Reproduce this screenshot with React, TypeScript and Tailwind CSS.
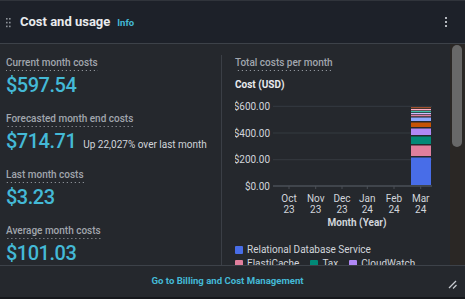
import React from "react";

const segs: [number, number, string][] = [
  [107, 108.3, "#a0522d"],
  [109, 110.3, "#ffb0c8"],
  [111, 112.3, "#40bfa9"],
  [113, 114.3, "#d6baff"],
  [115, 116.3, "#e07f9d"],
  [117.5, 121, "#8ea9ff"],
  [122.5, 127, "#c55305"],
  [128.5, 135, "#b088f5"],
  [136.5, 144, "#018977"],
  [145.5, 156, "#e07f9d"],
  [157.5, 185, "#486de8"],
];

const months: [string, string, number][] = [
  ["Oct", "23", 54],
  ["Nov", "23", 80.7],
  ["Dec", "23", 107],
  ["Jan", "24", 132.3],
  ["Feb", "24", 159],
  ["Mar", "24", 185.7],
];

const labelCls =
  "self-start text-[10px] leading-[13px] font-medium text-[#a1a6ad] pb-[2px] bg-[linear-gradient(to_right,#a4a9b0_1px,transparent_1px)] bg-[length:4px_1px] bg-repeat-x bg-bottom";

function Block({ label, value, extra }: { label: string; value: string; extra?: string }) {
  return (
    <div className="h-[56px] shrink-0 flex flex-col">
      <span className={labelCls}>{label}</span>
      <div className="mt-[2px] flex items-baseline">
        <span className="text-[20px] leading-[24px] font-medium tracking-[-0.5px] text-[#44b9d6]">{value}</span>
        {extra && <span className="ml-[7px] text-[10px] text-[#d1d5db]">{extra}</span>}
      </div>
    </div>
  );
}

function Legend({ color, text }: { color: string; text: string }) {
  return (
    <div className="flex items-center">
      <span className="w-[8px] h-[8px] rounded-[1px]" style={{ background: color }} />
      <span className="ml-[4px] text-[10px] leading-[14px] text-[#d1d5db]">{text}</span>
    </div>
  );
}

export default function App() {
  return (
    <div className="w-[465px] h-[299px] overflow-hidden bg-[#25282d] flex flex-col font-['Roboto',sans-serif] border-b-2 border-[#16181c]">
      <header className="h-[44px] shrink-0 bg-[#1d2129] border-t border-[#30343b] border-b border-b-[#3d4249] flex items-center pl-[6px] pr-[18px]">
        <svg width="5" height="10" viewBox="0 0 5 10" className="mt-[1px]">
          {[0, 3.8, 7.6].map((y) =>
            [0, 3].map((x) => (
              <rect key={`${x}-${y}`} x={x} y={y} width="1.6" height="1.6" fill="#8d9299" />
            ))
          )}
        </svg>
        <h2 className="ml-[9px] text-[13px] font-bold text-[#e9ebed]">Cost and usage</h2>
        <span className="ml-[7px] mt-[2px] text-[9.5px] font-bold text-[#44b9d6]">Info</span>
        <svg width="2" height="10" viewBox="0 0 2 10" className="ml-auto">
          <rect x="0" y="0" width="2" height="2" fill="#b4b8be" />
          <rect x="0" y="4" width="2" height="2" fill="#b4b8be" />
          <rect x="0" y="8" width="2" height="2" fill="#b4b8be" />
        </svg>
      </header>

      <div className="flex-1 flex min-h-0">
        <div className="flex-1 flex min-w-0 overflow-hidden">
          <div className="w-[221px] shrink-0 pl-[6px] pt-[12px] flex flex-col">
            <Block label="Current month costs" value="$597.54" />
            <Block label="Forecasted month end costs" value="$714.71" extra="Up 22,027% over last month" />
            <Block label="Last month costs" value="$3.23" />
            <Block label="Average month costs" value="$101.03" />
          </div>
          <div className="w-px mt-[11px] bg-[#3b3f46] shrink-0" />
          <div className="flex-1 pl-[13px] pt-[12px] flex flex-col min-w-0">
            <span className={labelCls}>Total costs per month</span>
            <span className="mt-[7px] text-[10px] leading-[13px] font-bold text-[#e9ebed]">Cost (USD)</span>
            <svg width="205" height="134" className="mt-[5px] shrink-0" fontFamily="Roboto, sans-serif">
              {[10.3, 37, 63.7].map((y) => (
                <line key={y} x1="38" x2="197" y1={y} y2={y} stroke="#353a41" strokeWidth="1" />
              ))}
              {[
                ["$600.00", 10.3],
                ["$400.00", 37],
                ["$200.00", 63.7],
                ["$0.00", 90],
              ].map(([t, y]) => (
                <text key={t as string} x="35" y={(y as number) + 3.6} textAnchor="end" fontSize="10" fill="#d1d5db">
                  {t}
                </text>
              ))}
              {segs.map(([a, b, c]) => (
                <rect key={a} x="176" y={a - 96} width="20" height={b - a} fill={c} />
              ))}
              <line x1="38" x2="197" y1="90" y2="90" stroke="#4a4f57" strokeWidth="1.5" />
              {months.map(([m, yr, x]) => (
                <g key={m}>
                  <line x1={x} x2={x} y1="90" y2="93" stroke="#4a4f57" strokeWidth="1" />
                  <text x={x} y="105.5" textAnchor="middle" fontSize="10" fill="#d1d5db">
                    {m}
                  </text>
                  <text x={x} y="117" textAnchor="middle" fontSize="10" fill="#d1d5db">
                    {yr}
                  </text>
                </g>
              ))}
              <text x="122" y="130.3" textAnchor="middle" fontSize="10" fontWeight="700" fill="#d1d5db">
                Month (Year)
              </text>
            </svg>
            <div className="mt-[13px] flex flex-col">
              <Legend color="#486de8" text="Relational Database Service" />
              <div className="flex items-center gap-[11px]">
                <Legend color="#e07f9d" text="ElastiCache" />
                <Legend color="#018977" text="Tax" />
                <Legend color="#b088f5" text="CloudWatch" />
              </div>
            </div>
          </div>
        </div>
        <div className="w-[15px] shrink-0 bg-[#2a2725] pl-[2px] pr-[3px] pt-px">
          <div className="h-[102px] rounded-full bg-[#686868]" />
        </div>
      </div>

      <footer className="relative h-[32px] shrink-0 border-t border-[#3d4249] flex items-center justify-center pr-[10px]">
        <span className="text-[9.6px] font-bold text-[#44b9d6]">Go to Billing and Cost Management</span>
        <svg width="9" height="9" viewBox="0 0 9 9" className="absolute right-[8px] top-[14px]">
          <line x1="1" y1="8" x2="8" y2="1" stroke="#c8ccd1" strokeWidth="1.3" />
          <line x1="5" y1="8.5" x2="8.5" y2="5" stroke="#c8ccd1" strokeWidth="1.3" />
        </svg>
      </footer>
    </div>
  );
}
